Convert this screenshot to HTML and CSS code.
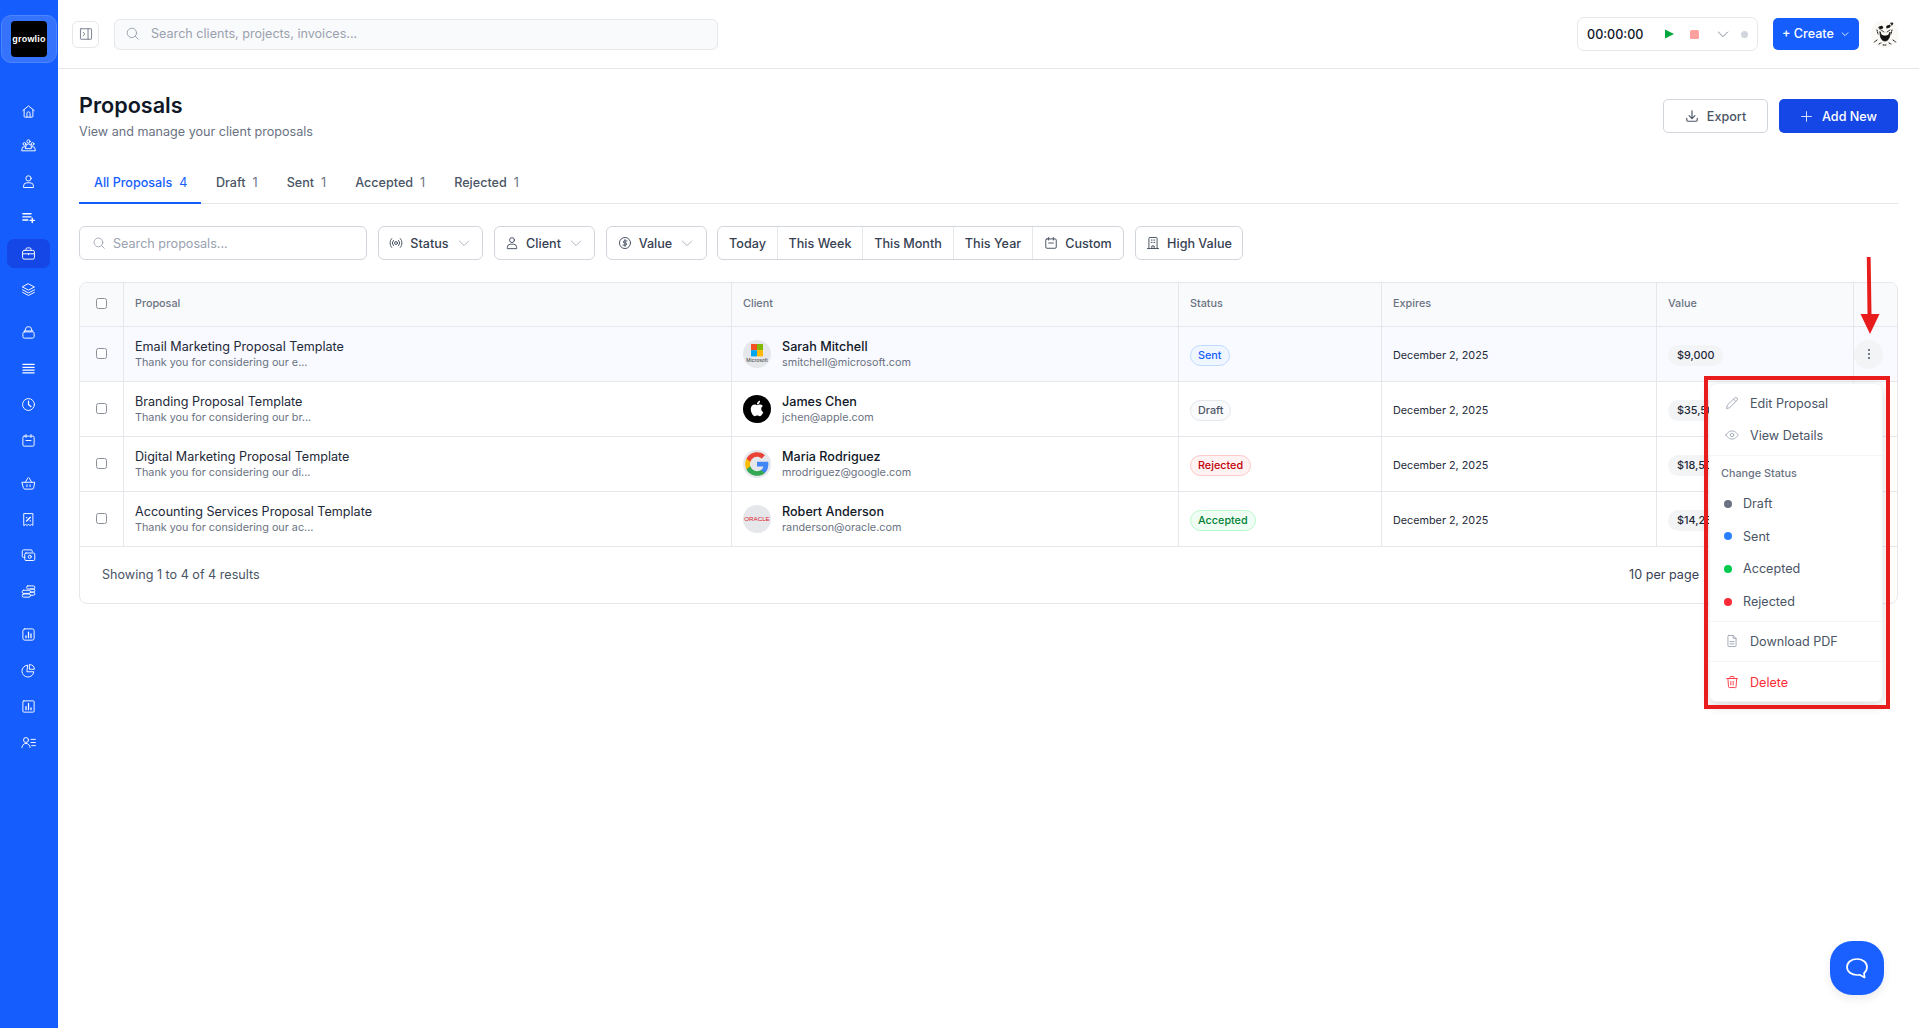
FILE: index.html
```html
<!DOCTYPE html>
<html lang="en">
<head>
<meta charset="utf-8">
<title>Proposals</title>
<link rel="stylesheet" href="styles.css">
</head>
<body>
<svg class="sprite" aria-hidden="true">
  <symbol id="i-home" viewBox="0 0 24 24"><path d="M3 10.500 12 3l9 7.500"/><path d="M5 9v11a1 1 0 0 0 1 1h12a1 1 0 0 0 1-1V9"/><path d="M9.500 21v-6a2.500 2.500 0 0 1 5 0v6"/></symbol>
  <symbol id="i-team" viewBox="0 0 24 24"><circle cx="12" cy="5.500" r="2.600"/><circle cx="5.500" cy="9.500" r="2.200"/><circle cx="18.500" cy="9.500" r="2.200"/><path d="M7.500 14a4.500 4.500 0 0 1 9 0v3h-9z"/><path d="M1.500 20v-2.500a3.500 3.500 0 0 1 3.500-3.500h2M22.500 20v-2.500a3.500 3.500 0 0 0-3.500-3.500h-2M1.500 20.500h21"/></symbol>
  <symbol id="i-user" viewBox="0 0 24 24"><circle cx="12" cy="7" r="4.200"/><path d="M4 21v-1.500a5.500 5.500 0 0 1 5.500-5.500h5a5.500 5.500 0 0 1 5.500 5.500V21z"/></symbol>
  <symbol id="i-listplus" viewBox="0 0 24 24"><path d="M3 6h13M3 11h13M3 16h8M18 13v7M14.500 16.500h7" stroke-width="2.200"/></symbol>
  <symbol id="i-brief" viewBox="0 0 24 24"><rect x="2.500" y="7" width="19" height="14" rx="2.500"/><path d="M8 7V5a2 2 0 0 1 2-2h4a2 2 0 0 1 2 2v2M2.500 12.500h19M12 12v2"/></symbol>
  <symbol id="i-layers" viewBox="0 0 24 24"><path d="m12 3 9.500 5-9.500 5-9.500-5z"/><path d="m2.500 12.500 9.500 5 9.500-5M2.500 16.500l9.500 5 9.500-5"/></symbol>
  <symbol id="i-bag" viewBox="0 0 24 24"><path d="M6.500 9 8 4.500a2 2 0 0 1 2-1.500h4a2 2 0 0 1 2 1.500L17.500 9"/><rect x="3" y="11" width="18" height="10" rx="2.500"/><path d="M5 9.500h14"/></symbol>
  <symbol id="i-lines" viewBox="0 0 24 24"><path d="M3 5.500h18M3 10h18M3 14.500h18M3 19h18" stroke-width="2"/></symbol>
  <symbol id="i-clock" viewBox="0 0 24 24"><circle cx="12" cy="12" r="9.500"/><path d="M12 6.500V12l4 3.500" stroke-width="2"/></symbol>
  <symbol id="i-cal" viewBox="0 0 24 24"><rect x="3" y="5" width="18" height="16" rx="2"/><path d="M8 2.500V7M16 2.500V7M8 12h8"/></symbol>
  <symbol id="i-basket" viewBox="0 0 24 24"><path d="m7 10 4-7M17 10l-4-7M2 10h20l-1.800 9a2.500 2.500 0 0 1-2.500 2H6.300a2.500 2.500 0 0 1-2.500-2zM9.500 14v3M14.500 14v3"/></symbol>
  <symbol id="i-receipt" viewBox="0 0 24 24"><path d="M5 2.500h14v19l-2.300-1.500-2.400 1.500-2.300-1.500-2.300 1.500L7.300 20 5 21.500z"/><path d="m9 14.500 6-6M9 9h.5M14.500 14h.5" stroke-width="2"/></symbol>
  <symbol id="i-cash" viewBox="0 0 24 24"><path d="M18 6V5a2 2 0 0 0-2-2H4a2 2 0 0 0-2 2v8a2 2 0 0 0 2 2h2"/><rect x="6" y="8" width="16" height="12" rx="2"/><circle cx="14" cy="14" r="2.500"/></symbol>
  <symbol id="i-coins" viewBox="0 0 24 24"><rect x="2" y="10" width="13" height="5" rx="2"/><rect x="2" y="16" width="13" height="5" rx="2"/><rect x="9" y="3" width="13" height="5" rx="2"/><path d="M15 8h5a2 2 0 0 1 2 2v1a2 2 0 0 1-2 2h-5M15 13h5a2 2 0 0 1 2 2v1a2 2 0 0 1-2 2h-5"/></symbol>
  <symbol id="i-chart" viewBox="0 0 24 24"><rect x="3" y="3" width="18" height="18" rx="3"/><path d="M8 17v-3M12 17V8M16 17v-6" stroke-width="2"/></symbol>
  <symbol id="i-pie" viewBox="0 0 24 24"><path d="M10 3.500A9.500 9.500 0 1 0 20.500 14H10z"/><path d="M14 2.500A8 8 0 0 1 21.500 10H14z"/></symbol>
  <symbol id="i-chart2" viewBox="0 0 24 24"><rect x="3" y="3" width="18" height="18" rx="1.500"/><path d="M8 17v-5M12 17V7M16 17v-3" stroke-width="2"/></symbol>
  <symbol id="i-userlist" viewBox="0 0 24 24"><circle cx="8" cy="8" r="4"/><path d="M1.500 20a6.500 6.500 0 0 1 13 0M16 7h7M16 12h7M17 17h6"/></symbol>
  <symbol id="i-search" viewBox="0 0 24 24"><circle cx="11" cy="11" r="7.500"/><path d="m21 21-4.500-4.500"/></symbol>
  <symbol id="i-chev" viewBox="0 0 24 24"><path d="m5 9 7 7 7-7"/></symbol>
  <symbol id="i-export" viewBox="0 0 24 24"><path d="M12 3v13M7 11.500l5 5 5-5" stroke-width="2"/><path d="M3 16v3a2 2 0 0 0 2 2h14a2 2 0 0 0 2-2v-3" stroke-width="2"/></symbol>
  <symbol id="i-plus" viewBox="0 0 24 24"><path d="M12 3v18M3 12h18"/></symbol>
  <symbol id="i-signal" viewBox="0 0 24 24"><circle cx="12" cy="12" r="2.500"/><path d="M7.500 7.500a6.500 6.500 0 0 0 0 9M16.500 7.500a6.500 6.500 0 0 1 0 9M4.500 4.500a11 11 0 0 0 0 15M19.500 4.500a11 11 0 0 1 0 15"/></symbol>
  <symbol id="i-dollar" viewBox="0 0 24 24"><circle cx="12" cy="12" r="9.500"/><path d="M15.500 8.500h-5a1.800 1.800 0 0 0 0 3.500h3a1.800 1.800 0 0 1 0 3.500h-5M12 6v12"/></symbol>
  <symbol id="i-building" viewBox="0 0 24 24"><path d="M5 21V4a1.500 1.500 0 0 1 1.500-1.500h11A1.500 1.500 0 0 1 19 4v17M2.500 21.500h19M10 21.500V17h4v4.500M9 7h1.500M13.500 7H15M9 11h1.500M13.500 11H15"/></symbol>
  <symbol id="i-pencil" viewBox="0 0 24 24"><path d="M16.500 3.500a2.800 2.800 0 0 1 4 4L8 20l-5.500 1.500L4 16z"/><path d="m14.500 5.500 4 4"/></symbol>
  <symbol id="i-eye" viewBox="0 0 24 24"><path d="M1.500 12S5.500 5 12 5s10.500 7 10.500 7-4 7-10.500 7S1.500 12 1.500 12z"/><circle cx="12" cy="12" r="3"/></symbol>
  <symbol id="i-doc" viewBox="0 0 24 24"><path d="M6 2.500h8l5 5V20a1.500 1.500 0 0 1-1.500 1.500h-11A1.500 1.500 0 0 1 5 20V4a1.500 1.500 0 0 1 1-1.500z"/><path d="M14 2.500v5h5M8.500 13h7M8.500 17h7"/></symbol>
  <symbol id="i-trash" viewBox="0 0 24 24"><path d="M3 6h18M8.500 6V4a1.500 1.500 0 0 1 1.500-1.500h4A1.500 1.500 0 0 1 15.500 4v2M5 6l1 14a1.500 1.500 0 0 0 1.500 1.500h9A1.500 1.500 0 0 0 19 20l1-14M10 11v6M14 11v6"/></symbol>
</svg>

<div class="app">
  <aside class="sidebar">
    <div class="brand"><div class="brand-mark">growlio</div></div>
    <nav class="nav">
      <div class="nav-group">
        <a class="nav-item"><svg class="ico-nav home-nudge"><use href="#i-home"/></svg></a>
        <a class="nav-item"><svg class="ico-nav"><use href="#i-team"/></svg></a>
        <a class="nav-item"><svg class="ico-nav"><use href="#i-user"/></svg></a>
        <a class="nav-item"><svg class="ico-nav"><use href="#i-listplus"/></svg></a>
        <a class="nav-item active"><svg class="ico-nav"><use href="#i-brief"/></svg></a>
        <a class="nav-item"><svg class="ico-nav"><use href="#i-layers"/></svg></a>
      </div>
      <div class="nav-group">
        <a class="nav-item"><svg class="ico-nav"><use href="#i-bag"/></svg></a>
        <a class="nav-item"><svg class="ico-nav"><use href="#i-lines"/></svg></a>
        <a class="nav-item"><svg class="ico-nav"><use href="#i-clock"/></svg></a>
        <a class="nav-item"><svg class="ico-nav"><use href="#i-cal"/></svg></a>
      </div>
      <div class="nav-group">
        <a class="nav-item"><svg class="ico-nav"><use href="#i-basket"/></svg></a>
        <a class="nav-item"><svg class="ico-nav"><use href="#i-receipt"/></svg></a>
        <a class="nav-item"><svg class="ico-nav"><use href="#i-cash"/></svg></a>
        <a class="nav-item"><svg class="ico-nav"><use href="#i-coins"/></svg></a>
      </div>
      <div class="nav-group">
        <a class="nav-item"><svg class="ico-nav"><use href="#i-chart"/></svg></a>
        <a class="nav-item"><svg class="ico-nav"><use href="#i-pie"/></svg></a>
        <a class="nav-item"><svg class="ico-nav"><use href="#i-chart2"/></svg></a>
        <a class="nav-item"><svg class="ico-nav"><use href="#i-userlist"/></svg></a>
      </div>
    </nav>
  </aside>

  <div class="main">
    <header class="topbar">
      <button class="toggle">
        <svg class="ico-toggle" viewBox="0 0 24 24"><rect x="2.500" y="3" width="19" height="18" rx="1"/><path d="M15.500 3v18M7 9l3 3-3 3"/></svg>
      </button>
      <div class="global-search">
        <svg class="ico-16 muted"><use href="#i-search"/></svg>
        <span>Search clients, projects, invoices...</span>
      </div>
      <div class="timer">
        <span class="timer-time">00:00:00</span>
        <svg class="timer-play" viewBox="0 0 10 10"><path d="M0 0 10 5 0 10z"/></svg>
        <span class="timer-stop"></span>
        <svg class="ico-chev-timer"><use href="#i-chev"/></svg>
        <span class="timer-dot"></span>
      </div>
      <button class="create">+ Create <svg class="ico-chev-create"><use href="#i-chev"/></svg></button>
      <div class="avatar">
        <svg viewBox="0 0 28 28"><path class="avatar-ink" d="M8 7l3-1 1 2-3 1zM16 6l3-1v2l-3 1zM20 3l2 0-1 2zM10 10l3 2M16 12l3-2M9 12c0 6 2 9 5 9s5-3 5-9c-1 3-2 4-5 4s-4-1-5-4z"/><path class="avatar-line" d="M2 23l4-3M22 20l4 3M8 24l2-1M18 23l2 1M12 25h4M6 10l1 4M21 10l-1 4"/></svg>
      </div>
    </header>

    <main class="page">
      <section class="page-head">
        <div>
          <h1>Proposals</h1>
          <p>View and manage your client proposals</p>
        </div>
        <div class="page-actions">
          <button class="btn-outline"><svg class="ico-14"><use href="#i-export"/></svg>Export</button>
          <button class="btn-primary"><svg class="ico-plus"><use href="#i-plus"/></svg>Add New</button>
        </div>
      </section>

      <div class="tabs">
        <a class="tab current">All Proposals<b>4</b></a>
        <a class="tab">Draft<b>1</b></a>
        <a class="tab">Sent<b>1</b></a>
        <a class="tab">Accepted<b>1</b></a>
        <a class="tab">Rejected<b>1</b></a>
      </div>

      <div class="filters">
        <div class="filter-search"><svg class="ico-14 muted"><use href="#i-search"/></svg><span>Search proposals...</span></div>
        <button class="filter w-status"><svg class="ico-14"><use href="#i-signal"/></svg>Status<svg class="ico-chev"><use href="#i-chev"/></svg></button>
        <button class="filter w-client"><svg class="ico-14"><use href="#i-user"/></svg>Client<svg class="ico-chev"><use href="#i-chev"/></svg></button>
        <button class="filter w-value"><svg class="ico-14"><use href="#i-dollar"/></svg>Value<svg class="ico-chev"><use href="#i-chev"/></svg></button>
        <div class="segments">
          <span class="seg s-today">Today</span>
          <span class="seg s-week">This Week</span>
          <span class="seg s-month">This Month</span>
          <span class="seg s-year">This Year</span>
          <span class="seg s-custom"><svg class="ico-14"><use href="#i-cal"/></svg>Custom</span>
        </div>
        <button class="filter w-high"><svg class="ico-14"><use href="#i-building"/></svg>High Value</button>
      </div>

      <div class="table-card">
        <table>
          <colgroup>
            <col class="c-check"><col class="c-proposal"><col class="c-client"><col class="c-status"><col class="c-expires"><col class="c-value"><col class="c-actions">
          </colgroup>
          <thead>
            <tr>
              <th class="center"><span class="check"></span></th>
              <th>Proposal</th><th>Client</th><th>Status</th><th>Expires</th><th>Value</th><th></th>
            </tr>
          </thead>
          <tbody>
            <tr class="hovered">
              <td class="center"><span class="check"></span></td>
              <td><div class="t-main">Email Marketing Proposal Template</div><div class="t-sub">Thank you for considering our e...</div></td>
              <td><div class="client">
                <span class="logo logo-grey">
                  <svg viewBox="0 0 28 28"><rect x="8" y="4" width="6" height="6.200" fill="#f25022"/><rect x="14" y="4" width="6" height="6.200" fill="#7fba00"/><rect x="8" y="10.200" width="6" height="6.200" fill="#00a4ef"/><rect x="14" y="10.200" width="6" height="6.200" fill="#ffb900"/><text class="logo-ms" x="14" y="21.500" text-anchor="middle">Microsoft</text></svg>
                </span>
                <div><div class="t-name">Sarah Mitchell</div><div class="t-sub">smitchell@microsoft.com</div></div>
              </div></td>
              <td><span class="status sent">Sent</span></td>
              <td class="date">December 2, 2025</td>
              <td><span class="amount">$9,000</span></td>
              <td class="cell-kebab"><span class="kebab"><i></i><i></i><i></i></span></td>
            </tr>
            <tr>
              <td class="center"><span class="check"></span></td>
              <td><div class="t-main">Branding Proposal Template</div><div class="t-sub">Thank you for considering our br...</div></td>
              <td><div class="client">
                <span class="logo logo-black">
                  <svg viewBox="0 0 24 24"><path transform="translate(5.400 5) scale(.55)" fill="#fff" d="M12.152 6.896c-.948 0-2.415-1.078-3.960-1.040-2.040.027-3.910 1.183-4.961 3.014-2.117 3.675-.546 9.103 1.519 12.090 1.013 1.454 2.208 3.090 3.792 3.039 1.520-.065 2.090-.987 3.935-.987 1.831 0 2.350.987 3.960.948 1.637-.026 2.676-1.480 3.676-2.948 1.156-1.688 1.636-3.325 1.662-3.415-.039-.013-3.182-1.221-3.220-4.857-.026-3.040 2.480-4.494 2.597-4.559-1.429-2.090-3.623-2.324-4.390-2.376-2-.156-3.675 1.090-4.610 1.090zM15.530 3.830c.843-1.012 1.400-2.427 1.245-3.830-1.207.052-2.662.805-3.532 1.818-.780.896-1.454 2.338-1.273 3.714 1.338.104 2.715-.688 3.559-1.701"/></svg>
                </span>
                <div><div class="t-name">James Chen</div><div class="t-sub">jchen@apple.com</div></div>
              </div></td>
              <td><span class="status draft">Draft</span></td>
              <td class="date">December 2, 2025</td>
              <td><span class="amount">$35,500</span></td>
              <td></td>
            </tr>
            <tr>
              <td class="center"><span class="check"></span></td>
              <td><div class="t-main">Digital Marketing Proposal Template</div><div class="t-sub">Thank you for considering our di...</div></td>
              <td><div class="client">
                <span class="logo logo-grey">
                  <svg viewBox="-1 -1 26 26"><path fill="#4285f4" d="M22.560 12.250c0-.780-.070-1.530-.200-2.250H12v4.260h5.920c-.260 1.370-1.040 2.530-2.210 3.310v2.770h3.570c2.080-1.920 3.280-4.740 3.280-8.090z"/><path fill="#34a853" d="M12 23c2.970 0 5.460-.980 7.280-2.660l-3.570-2.770c-.980.660-2.230 1.060-3.710 1.060-2.860 0-5.290-1.930-6.160-4.530H2.180v2.840C3.990 20.530 7.700 23 12 23z"/><path fill="#fbbc05" d="M5.840 14.090c-.220-.660-.350-1.360-.350-2.090s.130-1.430.350-2.090V7.070H2.180C1.430 8.550 1 10.220 1 12s.430 3.450 1.180 4.930l2.850-2.220.810-.620z"/><path fill="#ea4335" d="M12 5.380c1.620 0 3.060.560 4.210 1.640l3.150-3.150C17.450 2.090 14.970 1 12 1 7.700 1 3.990 3.470 2.180 7.070l3.660 2.840c.870-2.600 3.300-4.530 6.160-4.530z"/></svg>
                </span>
                <div><div class="t-name">Maria Rodriguez</div><div class="t-sub">mrodriguez@google.com</div></div>
              </div></td>
              <td><span class="status rejected">Rejected</span></td>
              <td class="date">December 2, 2025</td>
              <td><span class="amount">$18,500</span></td>
              <td></td>
            </tr>
            <tr>
              <td class="center"><span class="check"></span></td>
              <td><div class="t-main">Accounting Services Proposal Template</div><div class="t-sub">Thank you for considering our ac...</div></td>
              <td><div class="client">
                <span class="logo logo-grey">
                  <svg viewBox="0 0 28 28"><text class="logo-oracle" x="14" y="16" text-anchor="middle">ORACLE</text></svg>
                </span>
                <div><div class="t-name">Robert Anderson</div><div class="t-sub">randerson@oracle.com</div></div>
              </div></td>
              <td><span class="status accepted">Accepted</span></td>
              <td class="date">December 2, 2025</td>
              <td><span class="amount">$14,250</span></td>
              <td></td>
            </tr>
          </tbody>
        </table>
        <div class="table-foot">
          <span class="results">Showing 1 to 4 of 4 results</span>
          <span class="per-page">10 per page</span>
        </div>
      </div>
    </main>
  </div>

  <div class="menu">
    <div class="menu-sec sec-top">
      <a class="menu-item"><svg class="ico-menu"><use href="#i-pencil"/></svg>Edit Proposal</a>
      <a class="menu-item"><svg class="ico-menu"><use href="#i-eye"/></svg>View Details</a>
    </div>
    <div class="menu-sec sec-status">
      <div class="menu-label">Change Status</div>
      <a class="menu-status"><i class="dot d-draft"></i>Draft</a>
      <a class="menu-status"><i class="dot d-sent"></i>Sent</a>
      <a class="menu-status"><i class="dot d-accepted"></i>Accepted</a>
      <a class="menu-status"><i class="dot d-rejected"></i>Rejected</a>
    </div>
    <div class="menu-sec sec-pdf">
      <a class="menu-item"><svg class="ico-menu"><use href="#i-doc"/></svg>Download PDF</a>
    </div>
    <div class="menu-sec sec-del">
      <a class="menu-item danger"><svg class="ico-menu"><use href="#i-trash"/></svg>Delete</a>
    </div>
  </div>

  <div class="annot-box"></div>
  <svg class="annot-arrow" viewBox="0 0 20 78"><path d="M6.800 0h3.800l.9 57H19.500L10 77 .5 57h7z"/></svg>

  <button class="chat">
    <svg viewBox="0 0 24 24"><path d="M12 3c5.500 0 10 3.300 10 8 0 2.800-1.300 4.800-3 6.200l.6 4.300-5-2.700c-.8.100-1.700.2-2.600.2C6.500 19 2 15.700 2 11s4.500-8 10-8z"/></svg>
  </button>
</div>
</body>
</html>
```
FILE: styles.css
```css
* { box-sizing: border-box; }
html, body { margin: 0; height: 100%; }
body {
  font-family: Inter, "Liberation Sans", sans-serif;
  color: #101828;
  background: #fff;
  font-size: 12.6px;
  overflow: hidden;
}
button { font: inherit; cursor: pointer; }
svg { fill: none; stroke: currentColor; stroke-width: 1.5; stroke-linecap: round; stroke-linejoin: round; flex: none; }
.sprite { display: none; }
.muted { color: #99a1af; }

.app { position: relative; display: flex; height: 1028px; }

/* sidebar */
.sidebar { width: 58px; flex: none; background: #155dfc; color: #fff; display: flex; flex-direction: column; }
.brand { margin: 15px 0 0 1px; width: 56px; height: 48px; border-radius: 10px; background: #3573fc; border: 1px solid #4d85fd; display: flex; align-items: center; justify-content: center; }
.brand-mark { width: 36px; height: 36px; border-radius: 4px; background: #000; color: #fff; font: 700 9px/36px "Liberation Sans", sans-serif; text-align: center; letter-spacing: .2px; }
.nav { margin-top: 32px; display: flex; flex-direction: column; gap: 14px; padding: 0 8px 0 7px; }
.nav-group { display: flex; flex-direction: column; gap: 7px; }
.nav-item { height: 29px; border-radius: 7px; display: flex; align-items: center; justify-content: center; }
.nav-item.active { background: #1447e6; }
.ico-nav { width: 15px; height: 15px; }
.home-nudge { margin-top: 4px; }

/* topbar */
.main { flex: 1; min-width: 0; display: flex; flex-direction: column; }
.topbar { height: 69px; flex: none; border-bottom: 1px solid #e5e7eb; display: flex; align-items: center; padding: 0 20px 0 14px; }
.toggle { width: 27px; height: 27px; padding: 0; background: #fff; border: 1px solid #e5e7eb; border-radius: 6px; display: flex; align-items: center; justify-content: center; color: #6a7282; }
.ico-toggle { width: 14px; height: 14px; }
.global-search { margin-left: 15px; width: 604px; height: 31px; background: #f9fafb; border: 1px solid #e5e7eb; border-radius: 6px; display: flex; align-items: center; gap: 11px; padding: 0 0 1px 10px; color: #99a1af; }
.ico-16 { width: 15px; height: 15px; }
.timer { margin-left: auto; width: 181px; height: 34px; border: 1px solid #e5e7eb; border-radius: 7px; display: flex; align-items: center; padding-left: 9px; }
.timer-time { font-weight: 500; width: 78px; color: #101828; }
.timer-play { width: 9px; height: 10px; fill: #00a63e; stroke: none; }
.timer-stop { width: 9px; height: 9px; margin-left: 16px; border-radius: 1.5px; background: #fda0a0; }
.ico-chev-timer { width: 16px; height: 16px; color: #6a7282; margin-left: 16px; stroke-width: 1.2; }
.timer-dot { width: 7px; height: 7px; border-radius: 50%; background: #d1d5dc; margin-left: 10px; }
.create { margin-left: 15px; width: 86px; height: 32px; border: 0; border-radius: 5px; background: #155dfc; color: #fff; font-weight: 500; display: flex; align-items: center; justify-content: center; gap: 6px; padding: 0 0 1px; }
.ico-chev-create { width: 10px; height: 10px; stroke-width: 2; }
.avatar { margin-left: 12px; width: 28px; height: 28px; border-radius: 50%; background: #faf9f6; overflow: hidden; }
.avatar svg { width: 28px; height: 28px; display: block; color: #111; }
.avatar-ink { fill: #111; stroke: #111; stroke-width: .8; }
.avatar-line { stroke-width: 1; stroke-dasharray: 1 1; }

/* page */
.page { flex: 1; padding: 21px 21px 0; }
.page-head { display: flex; align-items: center; justify-content: space-between; height: 52px; }
h1 { margin: 0 0 2px; font-size: 21.6px; line-height: 30px; font-weight: 600; color: #101828; }
.page-head p { margin: 0; font-size: 12.6px; line-height: 20px; color: #6a7282; }
.page-actions { display: flex; gap: 11px; }
.btn-outline, .btn-primary { height: 34px; border-radius: 5px; display: flex; align-items: center; justify-content: center; font-weight: 500; }
.btn-outline { width: 105px; background: #fff; border: 1px solid #d1d5dc; color: #4a5565; gap: 8px; }
.btn-primary { width: 119px; background: #1447e6; border: 0; color: #fff; gap: 9px; }
.ico-14 { width: 14px; height: 14px; }
.ico-plus { width: 13px; height: 13px; }

.tabs { margin-top: 22px; height: 40px; display: flex; border-bottom: 1px solid #e5e7eb; }
.tab { height: 40px; padding: 0 14.5px 2px; display: flex; align-items: center; color: #4a5565; font-weight: 500; border-bottom: 2px solid transparent; }
.tab:first-child { padding: 0 14px 2px 15px; }
.tab b { margin-left: 7px; font-weight: 400; color: #6a7282; }
.tab.current { color: #155dfc; border-bottom-color: #155dfc; }
.tab.current b { color: #155dfc; }

.filters { margin-top: 22px; display: flex; align-items: center; height: 34px; }
.filter-search { width: 288px; height: 34px; border: 1px solid #d1d5dc; border-radius: 6px; display: flex; align-items: center; gap: 7px; padding-left: 12px; color: #99a1af; }
.filter { height: 34px; background: #fff; border: 1px solid #d1d5dc; border-radius: 6px; display: flex; align-items: center; justify-content: center; gap: 7px; color: #364153; font-weight: 500; padding: 0; margin-left: 11px; }
.w-status { width: 105px; }
.w-client { width: 101px; }
.w-value { width: 101px; }
.w-high { width: 108px; }
.ico-chev { width: 16px; height: 16px; color: #99a1af; stroke-width: 1.2; }
.segments { margin-left: 10px; height: 34px; width: 407px; display: flex; border: 1px solid #d1d5dc; border-radius: 6px; }
.seg { display: flex; align-items: center; justify-content: center; gap: 7px; color: #364153; font-weight: 500; border-right: 1px solid #e5e7eb; }
.seg:last-child { border-right: 0; }
.s-today { width: 60px; }
.s-week { width: 85px; }
.s-month { width: 91px; }
.s-year { width: 79px; }
.s-custom { flex: 1; }

/* table */
.table-card { margin-top: 22px; border: 1px solid #e5e7eb; border-radius: 8px; overflow: hidden; height: 322px; }
table { width: 100%; table-layout: fixed; border-collapse: separate; border-spacing: 0; }
.c-check { width: 44px; }
.c-proposal { width: 608px; }
.c-client { width: 447px; }
.c-status { width: 203px; }
.c-expires { width: 275px; }
.c-value { width: 197px; }
.c-actions { width: 43px; }
th, td { padding: 0 0 0 11px; border-right: 1px solid #e5e7eb; border-bottom: 1px solid #e5e7eb; text-align: left; vertical-align: middle; }
th:last-child, td:last-child { border-right: 0; }
th { height: 44px; padding-bottom: 2px; background: #f9fafb; font-size: 10.8px; font-weight: 500; color: #6a7282; }
td { height: 55px; }
th.center { padding-left: 0; }
td.center { padding: 0 0 2px; }
td.cell-kebab { padding: 0; }
td.date { padding-top: 2px; }
.hovered td { background: #f9faff; }
.check { display: block; margin: 0 auto; width: 11px; height: 11px; border: 1px solid #8a8f98; border-radius: 2.5px; background: #fff; }
.t-main { line-height: 16px; color: #1e2939; }
.t-name { line-height: 16px; font-weight: 500; color: #101828; }
.t-sub { font-size: 10.8px; line-height: 15px; color: #6a7282; }
.client { display: flex; align-items: center; gap: 11px; }
.logo { width: 28px; height: 28px; border-radius: 50%; display: block; overflow: hidden; flex: none; }
.logo svg { display: block; width: 28px; height: 28px; stroke: none; }
.logo-grey { background: #e5e7eb; }
.logo-black { background: #000; }
.logo-ms { font: 400 5px "Liberation Sans", sans-serif; fill: #333; stroke: none; letter-spacing: .15px; }
.logo-oracle { font: 400 6.2px "Liberation Sans", sans-serif; fill: #e0202c; stroke: none; }
.status { display: inline-block; margin-top: 2px; height: 21px; padding: 0 7px; border-radius: 11px; border: 1px solid; font-size: 10.8px; line-height: 19px; font-weight: 500; }
.sent { background: #eff6ff; border-color: #bedbff; color: #155dfc; }
.draft { background: #f9fafb; border-color: #e5e7eb; color: #4a5565; }
.rejected { background: #fef2f2; border-color: #ffc9c9; color: #c10007; }
.accepted { background: #f0fdf4; border-color: #b9f8cf; color: #008236; }
.date { font-size: 10.8px; color: #1e2939; }
.amount { display: inline-block; margin-top: 2px; height: 21px; padding: 0 9px; border-radius: 11px; background: #f3f4f6; font-size: 10.8px; line-height: 21px; font-weight: 500; color: #1e2939; }
.kebab { display: inline-flex; flex-direction: column; align-items: center; justify-content: center; gap: 2px; width: 29px; height: 29px; border-radius: 50%; background: #f3f4f6; vertical-align: middle; }
.kebab i { width: 2px; height: 2px; border-radius: 50%; background: #4a5565; }
.table-foot { height: 55px; display: flex; align-items: center; justify-content: space-between; padding: 0 198px 0 22px; color: #4a5565; }
.per-page { color: #364153; }

/* dropdown menu */
.menu { position: absolute; left: 1709px; top: 383px; width: 174px; height: 319px; background: #fff; border: 1px solid #f3f4f6; border-radius: 7px; box-shadow: 0 4px 12px rgba(0, 0, 0, .14); display: flex; flex-direction: column; }
.menu-sec { border-bottom: 1px solid #f3f4f6; }
.menu-sec:last-child { border-bottom: 0; }
.sec-top { padding: 3px 0 4px; }
.sec-status { padding-bottom: 3.5px; }
.sec-pdf { padding: 3px 0 4px; }
.sec-del { padding: 4px 0 3px; }
.menu-item { height: 32px; display: flex; align-items: center; gap: 11px; padding-left: 15px; color: #4a5565; }
.menu-item svg { color: #99a1af; }
.menu-item.danger, .menu-item.danger svg { color: #fb2c36; }
.ico-menu { width: 14px; height: 14px; }
.menu-label { padding: 10px 0 5.5px 11px; font-size: 10.8px; line-height: 16px; font-weight: 500; color: #6a7282; }
.menu-status { height: 32.6px; display: flex; align-items: center; gap: 11px; padding-left: 14px; color: #4a5565; }
.dot { width: 8px; height: 8px; border-radius: 50%; flex: none; }
.d-draft { background: #6a7282; }
.d-sent { background: #2b7fff; }
.d-accepted { background: #00c950; }
.d-rejected { background: #fb2c36; }

/* annotations over the screenshot */
.annot-box { position: absolute; left: 1704px; top: 376px; width: 186px; height: 333px; border: 4.5px solid #e81c1c; }
.annot-arrow { position: absolute; left: 1860px; top: 257px; width: 20px; height: 78px; fill: #e81c1c; stroke: none; }

/* chat launcher */
.chat { position: absolute; left: 1830px; top: 941px; width: 54px; height: 54px; border: 0; border-radius: 22px; background: #1a5fff; display: flex; align-items: center; justify-content: center; color: #fff; box-shadow: 0 4px 10px rgba(0, 0, 0, .08); padding: 0; }
.chat svg { width: 24px; height: 24px; stroke-width: 1.7; }
```
